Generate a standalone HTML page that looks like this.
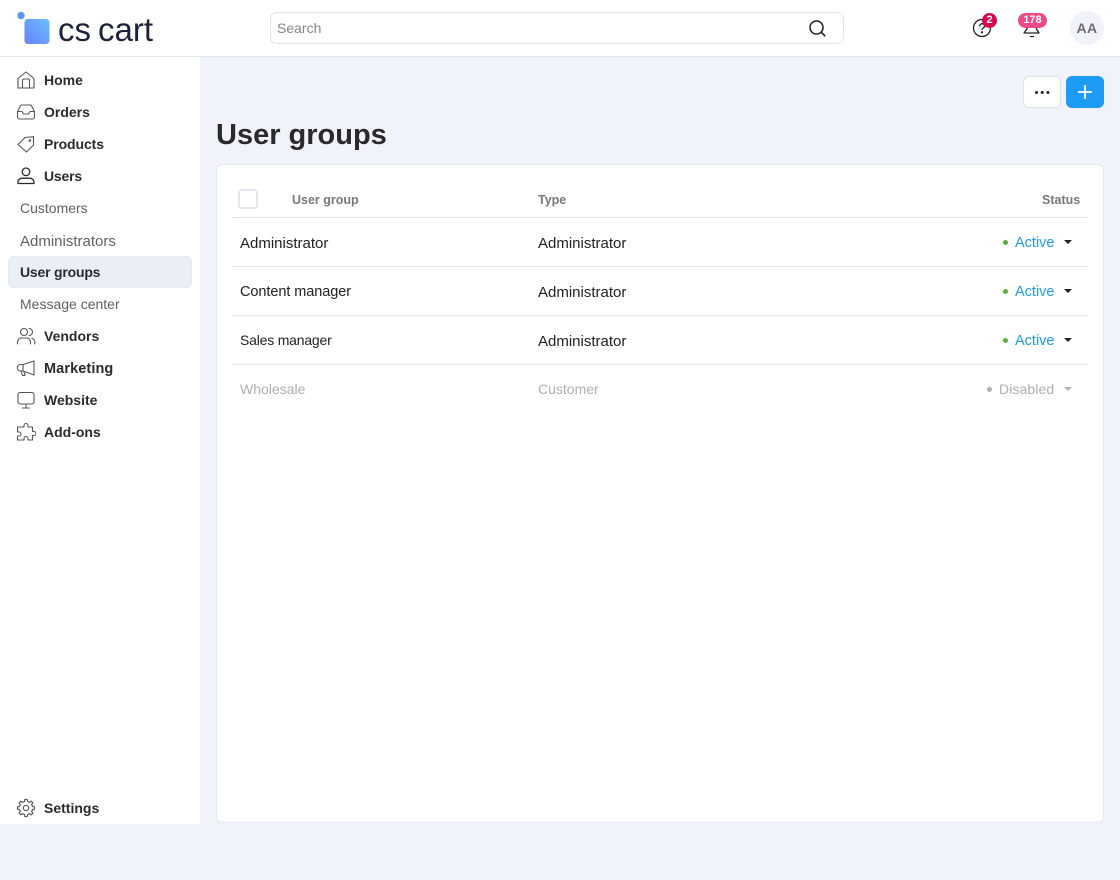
<!DOCTYPE html>
<html lang="en">
<head>
<meta charset="utf-8">
<title>User groups</title>
<style>
*{box-sizing:border-box}
html,body{margin:0;padding:0;width:1120px;height:880px;overflow:hidden;background:#f0f3fa;font-family:"Liberation Sans",sans-serif;color:#222}
.a{position:absolute;white-space:nowrap}
#top{left:0;top:0;width:1120px;height:57px;background:#fff;border-bottom:1px solid #e2e6f0}
#side{left:0;top:57px;width:200px;height:767px;background:#fff}
.m{position:absolute;left:44px;font-size:14px;font-weight:700;line-height:20px;color:#2b2b2f;white-space:nowrap}
.s{position:absolute;left:20px;font-size:14px;line-height:20px;color:#5f6166;white-space:nowrap}
svg.i{position:absolute;left:16px;width:20px;height:20px;fill:none;stroke:#55575c;stroke-width:1.100;stroke-linecap:round;stroke-linejoin:round}
#card{left:216px;top:164px;width:888px;height:659px;background:#fff;border:1px solid #e2e6ee;border-radius:6px}
.l{position:absolute;left:232px;width:856px;height:1px;background:#e2e6ec}
.t{position:absolute;font-size:14px;line-height:20px;color:#222;white-space:nowrap}
.w{font-size:15px;line-height:21px}
.h{position:absolute;font-size:12.5px;font-weight:700;line-height:16px;color:#77787d;white-space:nowrap}
.dot{position:absolute;width:5px;height:5px;border-radius:50%;background:#55b33b}
.car{position:absolute;width:0;height:0;border-left:4px solid transparent;border-right:4px solid transparent;border-top:4px solid #222}
.ac{font-size:14.5px;color:#1f9be8}
</style>
</head>
<body>
<div class="a" id="top"></div>
<div class="a" id="side"></div>

<!-- logo -->
<svg class="a" style="left:14px;top:9px" width="40" height="40" viewBox="0 0 40 40">
<defs><linearGradient id="g" x1="0" y1="1" x2="1" y2="0"><stop offset="0" stop-color="#6a80ff"/><stop offset="1" stop-color="#68c0ff"/></linearGradient></defs>
<circle cx="7" cy="6.500" r="3.700" fill="#5f97fb"/>
<rect x="10.500" y="10" width="25" height="25" rx="3.500" fill="url(#g)"/>
</svg>
<div class="a" style="left:58px;top:12px;font-size:33px;line-height:36px;color:#1d2238">cs</div>
<div class="a" style="left:98px;top:12px;font-size:33px;line-height:36px;color:#1d2238">cart</div>

<!-- search -->
<div class="a" style="left:270px;top:12px;width:574px;height:32px;border:1px solid #e0e2e6;border-radius:7px;background:#fff"></div>
<div class="a" style="left:277px;top:18px;font-size:14px;line-height:20px;color:#85878c">Search</div>
<svg class="a" style="left:807px;top:18px" width="20" height="20" viewBox="0 0 20 20" fill="none" stroke="#1c1c1e" stroke-width="1.500" stroke-linecap="round"><circle cx="9.500" cy="9.500" r="6.500"/><path d="M14.300 14.300l3.500 3.500"/></svg>

<!-- top icons -->
<svg class="a" style="left:972px;top:18px" width="20" height="20" viewBox="0 0 20 20" fill="none" stroke="#222" stroke-width="1.300" stroke-linecap="round"><circle cx="10" cy="10" r="8.500"/><path d="M7.800 8a2.300 2.300 0 1 1 3.400 2c-.8.500-1.200.9-1.200 1.600"/><circle cx="10" cy="14.300" r=".5" fill="#222"/></svg>
<div class="a" style="left:982px;top:13px;width:15px;height:15px;border-radius:50%;background:#d6084f;color:#fff;font-size:11px;font-weight:700;line-height:15px;text-align:center">2</div>
<svg class="a" style="left:1022px;top:18px" width="20" height="20" viewBox="0 0 20 20" fill="none" stroke="#222" stroke-width="1.300" stroke-linecap="round" stroke-linejoin="round"><path d="M6 8c0-2.500 1.800-4.500 4-4.500s4 2 4 4.500c0 2.500 1 4 3 7H2c2-3 4-4.500 4-7z"/><path d="M8.500 18.500h3"/></svg>
<div class="a" style="left:1018px;top:13px;width:29px;height:15px;border-radius:8px;background:#ec4a87;color:#fff;font-size:11px;font-weight:700;line-height:15px;text-align:center">178</div>
<div class="a" style="left:1070px;top:11px;width:34px;height:34px;border-radius:50%;background:#f0f3fa;color:#6b6d73;font-size:14px;font-weight:700;line-height:34px;text-align:center;letter-spacing:.4px">AA</div>

<!-- nav -->
<svg class="i" style="top:70px" viewBox="0 0 20 20"><path d="M2 8.500 10 2l8 6.500V18H2z"/><path d="M6.500 18v-7.500a1.500 1.500 0 0 1 1.500-1.500h4a1.500 1.500 0 0 1 1.500 1.500V18"/></svg>
<div class="m" style="top:70px">Home</div>
<svg class="i" style="top:102px" viewBox="0 0 20 20"><path d="M5 3h10l3.500 6.500V15a2 2 0 0 1-2 2h-13a2 2 0 0 1-2-2V9.500z"/><path d="M1.500 9.500H6l1.500 2.500h5L14 9.500h4.500"/></svg>
<div class="m" style="top:102px">Orders</div>
<svg class="i" style="top:134px" viewBox="0 0 20 20"><path d="M2 10.500 9 3.500l8.500-.8V11L10.500 18z"/><circle cx="13.800" cy="6.500" r=".7"/></svg>
<div class="m" style="top:134px;letter-spacing:-.1px">Products</div>
<svg class="i" style="top:166px;stroke:#2b2b2f;stroke-width:1.300" viewBox="0 0 20 20"><circle cx="10" cy="5.800" r="3.800"/><path d="M2 17.500v-1.500c0-2.300 2-3.800 4.500-3.800h7c2.500 0 4.500 1.500 4.500 3.800v1.500z"/></svg>
<div class="m" style="top:166px;letter-spacing:-.2px">Users</div>
<div class="s" style="top:198px">Customers</div>
<div class="s w" style="top:231px">Administrators</div>
<div class="a" style="left:8px;top:256px;width:184px;height:32px;background:#e9eef7;border:1px solid #e4e9f3;border-radius:6px"></div>
<div class="m" style="left:20px;top:262px;letter-spacing:-.2px">User groups</div>
<div class="s" style="top:294px">Message center</div>
<svg class="i" style="top:326px" viewBox="0 0 20 20"><circle cx="8" cy="6" r="3.500"/><path d="M1.500 18v-2c0-2.500 2-4 4-4h5c2 0 4 1.500 4 4v2"/><path d="M13 2.500a3.500 3.500 0 0 1 0 7M16 12.300c1.500.5 2.800 2 2.800 3.700v2"/></svg>
<div class="m" style="top:326px">Vendors</div>
<svg class="i" style="top:358px" viewBox="0 0 20 20"><path d="M18 3v14L7 13H4.500a3.200 3.200 0 0 1 0-6.500H7z"/><path d="M7 6.500V13M5 13l1.500 4.500H9L8 13.500"/></svg>
<div class="m" style="top:359px;font-size:14.5px;letter-spacing:.1px">Marketing</div>
<svg class="i" style="top:390px" viewBox="0 0 20 20"><rect x="2" y="2.500" width="16" height="11.500" rx="2"/><path d="M10 14v4M6.500 18h7"/></svg>
<div class="m" style="top:390px">Website</div>
<svg class="i" style="top:422px" viewBox="0 0 20 20"><path d="M8 3.500a2 2 0 0 1 4 0V5h4.500v4.500H18a2 2 0 0 1 0 4h-1.500V18H12v-1.500a2 2 0 0 0-4 0V18H1.500v-4H3a2 2 0 0 0 0-4H1.500V5H8z"/></svg>
<div class="m" style="top:422px">Add-ons</div>
<svg class="i" style="top:798px" viewBox="0 0 20 20"><circle cx="10" cy="10" r="2.700"/><path d="M7.470 3.900 8.520 3.570 8.800 1.480H11.200L11.480 3.570 12.530 3.900"/><path transform="rotate(45 10 10)" d="M7.470 3.900 8.520 3.570 8.800 1.480H11.200L11.480 3.570 12.530 3.900"/><path transform="rotate(90 10 10)" d="M7.470 3.900 8.520 3.570 8.800 1.480H11.200L11.480 3.570 12.530 3.900"/><path transform="rotate(135 10 10)" d="M7.470 3.900 8.520 3.570 8.800 1.480H11.200L11.480 3.570 12.530 3.900"/><path transform="rotate(180 10 10)" d="M7.470 3.900 8.520 3.570 8.800 1.480H11.200L11.480 3.570 12.530 3.900"/><path transform="rotate(225 10 10)" d="M7.470 3.900 8.520 3.570 8.800 1.480H11.200L11.480 3.570 12.530 3.900"/><path transform="rotate(270 10 10)" d="M7.470 3.900 8.520 3.570 8.800 1.480H11.200L11.480 3.570 12.530 3.900"/><path transform="rotate(315 10 10)" d="M7.470 3.900 8.520 3.570 8.800 1.480H11.200L11.480 3.570 12.530 3.900"/></svg>
<div class="m" style="top:798px">Settings</div>

<!-- actions -->
<div class="a" style="left:1023px;top:76px;width:38px;height:32px;background:#fff;border:1px solid #dfe3ea;border-radius:6px"></div>
<div class="a" style="left:1035px;top:90.500px;width:3.200px;height:3.200px;border-radius:50%;background:#222;box-shadow:5.700px 0 0 #222,11.400px 0 0 #222"></div>
<div class="a" style="left:1066px;top:76px;width:38px;height:32px;background:#1e9bf5;border-radius:6px"></div>
<svg class="a" style="left:1077px;top:84px" width="16" height="16" viewBox="0 0 16 16" stroke="#fff" stroke-width="1.800" stroke-linecap="round"><path d="M8 1.800v12.400M1.800 8h12.400"/></svg>

<div class="a" style="left:216px;top:116px;font-size:29px;font-weight:700;line-height:38px;color:#2a2a2c">User groups</div>

<!-- card -->
<div class="a" id="card"></div>
<div class="a" style="left:238px;top:189px;width:20px;height:20px;background:#fff;border:2px solid #dfe6f1;border-radius:4px"></div>
<div class="h" style="left:292px;top:192px">User group</div>
<div class="h" style="left:538px;top:192px">Type</div>
<div class="h" style="left:1042px;top:192px">Status</div>
<div class="l" style="top:217px"></div>
<div class="l" style="top:266px"></div>
<div class="l" style="top:315px"></div>
<div class="l" style="top:364px"></div>

<div class="t w" style="left:240px;top:233px">Administrator</div>
<div class="t w" style="left:538px;top:233px">Administrator</div>
<div class="dot" style="left:1003px;top:240px"></div>
<div class="t ac" style="left:1015px;top:233px">Active</div>
<div class="car" style="left:1064px;top:240px"></div>

<div class="t" style="left:240px;top:282px;font-size:14.5px;letter-spacing:-.07px">Content manager</div>
<div class="t w" style="left:538px;top:282px">Administrator</div>
<div class="dot" style="left:1003px;top:289px"></div>
<div class="t ac" style="left:1015px;top:282px">Active</div>
<div class="car" style="left:1064px;top:289px"></div>

<div class="t" style="left:240px;top:330px;letter-spacing:-.2px">Sales manager</div>
<div class="t w" style="left:538px;top:331px">Administrator</div>
<div class="dot" style="left:1003px;top:338px"></div>
<div class="t ac" style="left:1015px;top:331px">Active</div>
<div class="car" style="left:1064px;top:338px"></div>

<div class="t" style="left:240px;top:379px;color:#aeafb2">Wholesale</div>
<div class="t" style="left:538px;top:379px;color:#aeafb2">Customer</div>
<div class="dot" style="left:987px;top:387px;background:#aeafb2"></div>
<div class="t" style="left:999px;top:379px;color:#aeafb2;letter-spacing:.1px">Disabled</div>
<div class="car" style="left:1064px;top:387px;border-top-color:#b4b5b8"></div>
</body>
</html>
